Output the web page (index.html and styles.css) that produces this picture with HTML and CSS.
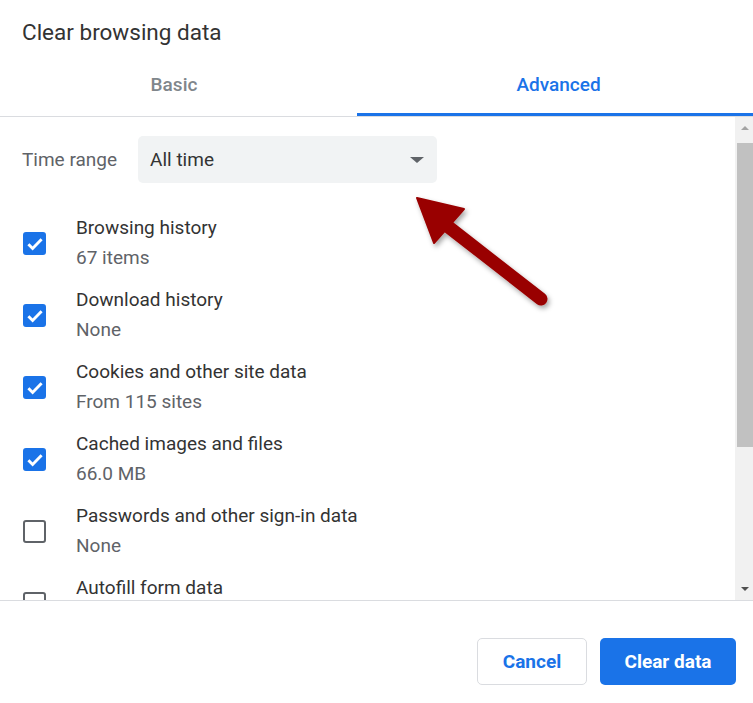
FILE: index.html
```html
<!DOCTYPE html>
<html lang="en">
<head>
    <meta charset="UTF-8">
    <title>Clear browsing data</title>
    <link rel="stylesheet" href="styles.css">
</head>
<body>
    <div class="dialog">
        <h1 class="title">Clear browsing data</h1>

        <div class="tabs">
            <div class="tab basic">Basic</div>
            <div class="tab active">Advanced</div>
        </div>

        <div class="body">
            <div class="list">
                <div class="range">
                    <span class="range-label">Time range</span>
                    <div class="select">
                        <span>All time</span>
                        <span class="caret"></span>
                    </div>
                </div>

                <div class="row">
                    <span class="box checked"><svg viewBox="0 0 24 24"><path d="M4.8 12.3l4.6 4.6 9.8-10" /></svg></span>
                    <div class="label">
                        <div class="main">Browsing history</div>
                        <div class="sub">67 items</div>
                    </div>
                </div>
                <div class="row">
                    <span class="box checked"><svg viewBox="0 0 24 24"><path d="M4.8 12.3l4.6 4.6 9.8-10" /></svg></span>
                    <div class="label">
                        <div class="main">Download history</div>
                        <div class="sub">None</div>
                    </div>
                </div>
                <div class="row">
                    <span class="box checked"><svg viewBox="0 0 24 24"><path d="M4.8 12.3l4.6 4.6 9.8-10" /></svg></span>
                    <div class="label">
                        <div class="main">Cookies and other site data</div>
                        <div class="sub">From 115 sites</div>
                    </div>
                </div>
                <div class="row">
                    <span class="box checked"><svg viewBox="0 0 24 24"><path d="M4.8 12.3l4.6 4.6 9.8-10" /></svg></span>
                    <div class="label">
                        <div class="main">Cached images and files</div>
                        <div class="sub">66.0 MB</div>
                    </div>
                </div>
                <div class="row">
                    <span class="box"></span>
                    <div class="label">
                        <div class="main">Passwords and other sign-in data</div>
                        <div class="sub">None</div>
                    </div>
                </div>
                <div class="row">
                    <span class="box"></span>
                    <div class="label">
                        <div class="main">Autofill form data</div>
                    </div>
                </div>
            </div>

            <div class="scrollbar">
                <span class="arrow up"></span>
                <span class="thumb"></span>
                <span class="track"></span>
                <span class="arrow down"></span>
            </div>
        </div>

        <div class="footer">
            <button class="btn cancel">Cancel</button>
            <button class="btn primary">Clear data</button>
        </div>

        <!-- annotation arrow drawn over the dialog -->
        <svg class="pointer" width="753" height="703" viewBox="0 0 753 703">
            <defs>
                <filter id="shadow" x="-20%" y="-20%" width="140%" height="140%">
                    <feDropShadow dx="2" dy="3" stdDeviation="2.5" flood-color="#000" flood-opacity="0.35" />
                </filter>
            </defs>
            <g filter="url(#shadow)" fill="#990000" stroke="#990000">
                <line x1="446" y1="225" x2="541" y2="299" stroke-width="13" stroke-linecap="round" />
                <polygon points="417,198 464,209 434,243" stroke-width="2" stroke-linejoin="round" />
            </g>
        </svg>
    </div>
</body>
</html>
```

FILE: styles.css
```css
* {
    margin: 0;
    padding: 0;
    box-sizing: border-box;
}

body {
    width: 753px;
    height: 703px;
    background: #fff;
    font-family: Roboto, 'Liberation Sans', sans-serif;
    color: #333;
    overflow: hidden;
}

.dialog {
    position: relative;
    width: 753px;
    height: 703px;
    display: flex;
    flex-direction: column;
}

.title {
    font-size: 22.5px;
    font-weight: 400;
    line-height: 28px;
    padding: 18px 22px 0;
    height: 46px;
    color: #333;
}

.tabs {
    display: flex;
    height: 71px;
    border-bottom: 1px solid #dadce0;
}

.tab {
    flex: 1;
    text-align: center;
    font-size: 19px;
    font-weight: 500;
    line-height: 22px;
    padding: 28px 0 0 7px;
    color: #80868b;
    border-bottom: 3px solid transparent;
}

.tab.basic {
    flex: 0 0 357px;
    padding: 28px 9px 0 0;
}

.tab.active {
    color: #1a73e8;
    border-bottom-color: #1a73e8;
}

.body {
    display: flex;
    height: 484px;
    border-bottom: 1px solid #dadce0;
}

.list {
    flex: 1;
    overflow: hidden;
    padding: 19px 0 0 22px;
}

.range {
    display: flex;
    align-items: center;
    gap: 21px;
    margin-bottom: 24px;
}

.range-label {
    font-size: 19px;
    color: #5f6368;
}

.select {
    width: 299px;
    height: 47px;
    background: #f1f3f4;
    border-radius: 5px;
    display: flex;
    align-items: center;
    justify-content: space-between;
    padding: 0 13px 0 12px;
    font-size: 19px;
    color: #333;
}

.caret {
    width: 0;
    height: 0;
    border-left: 7px solid transparent;
    border-right: 7px solid transparent;
    border-top: 6px solid #5f6368;
}

.row {
    display: flex;
    align-items: flex-start;
    gap: 30px;
    height: 72px;
    padding-left: 1px;
}

.box {
    width: 23px;
    height: 23px;
    margin-top: 25px;
    border: 2.5px solid #5f6368;
    border-radius: 3px;
    flex-shrink: 0;
    display: flex;
    align-items: center;
    justify-content: center;
}

.box.checked {
    background: #1a73e8;
    border-color: #1a73e8;
}

.box svg {
    width: 22px;
    height: 22px;
    flex-shrink: 0;
    fill: none;
    stroke: #fff;
    stroke-width: 3.2;
}

.label {
    font-size: 19px;
    line-height: 30px;
    padding-top: 6px;
}

.main {
    color: #333;
}

.sub {
    color: #5f6368;
}

.scrollbar {
    width: 18px;
    background: #f1f1f1;
    display: flex;
    flex-direction: column;
    align-items: center;
    padding-left: 2px;
}

.arrow {
    width: 0;
    height: 0;
    border-left: 4px solid transparent;
    border-right: 4px solid transparent;
    margin: 9px 0 13px;
}

.arrow.up {
    border-bottom: 4px solid #a3a3a3;
}

.arrow.down {
    border-top: 4px solid #505050;
    margin: 0 0 9px;
}

.thumb {
    width: 16px;
    height: 304px;
    background: #c1c1c1;
}

.track {
    flex: 1;
}

.footer {
    flex: 1;
    display: flex;
    justify-content: flex-end;
    align-items: flex-start;
    gap: 13px;
    padding: 37px 17px 0 0;
}

.btn {
    height: 47px;
    border-radius: 5px;
    font-family: Roboto, 'Liberation Sans', sans-serif;
    font-size: 19px;
    font-weight: 700;
}

.cancel {
    width: 110px;
    background: #fff;
    color: #1a73e8;
    border: 1.5px solid #dadce0;
}

.primary {
    width: 136px;
    background: #1a73e8;
    color: #fff;
    border: none;
}

.pointer {
    position: absolute;
    top: 0;
    left: 0;
    pointer-events: none;
}
```
